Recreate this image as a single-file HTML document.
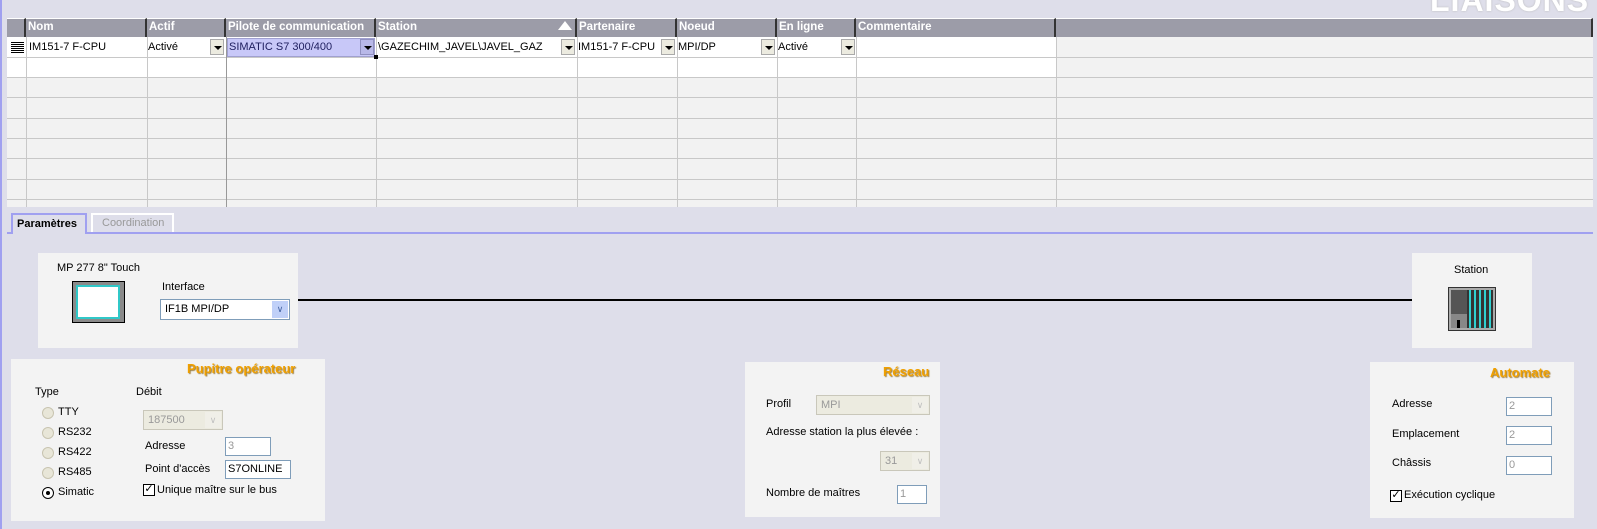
<!DOCTYPE html>
<html><head><meta charset="utf-8"><style>
*{margin:0;padding:0;box-sizing:border-box}
body{width:1597px;height:529px;background:#dedeea;font-family:"Liberation Sans",Tahoma,sans-serif;font-size:11px;color:#000;position:relative;overflow:hidden}
.a{position:absolute;white-space:nowrap}
.hd{position:absolute;top:18px;height:19px;background:#9c9ca8;color:#fff;font-weight:bold;font-size:11.5px;padding:2px 0 0 2px;border-top:1px solid #fff;border-right:2px solid #333}
.vl{position:absolute;top:37px;height:170px;width:1px;background:#c8c8c8}
.hl{position:absolute;left:7px;width:1586px;height:1px;background:#c8c8c8}
.dd{position:absolute;width:14px;height:16px;background:#ecebe0;border:1px solid #aaa}
.dd:after{content:"";position:absolute;left:3px;top:6px;border:4px solid transparent;border-top:4px solid #000;border-bottom:0}
.box{position:absolute;background:#f3f3f3}
.ttl{position:absolute;color:#f0a000;font-weight:bold;font-size:13px;text-shadow:1px 1px 1px #a08040}
.inp{position:absolute;background:#fff;border:1px solid #7f9db9;color:#999;padding:2px 0 0 2px;height:19px}
.sel{position:absolute;background:#ecebe0;border:1px solid #c9c7ba;color:#999;padding:3px 0 0 4px;height:20px}
.sel i{position:absolute;right:1px;top:1px;width:16px;height:16px;background:#f0efe8;color:#c0c0c0;font-style:normal;font-size:9px;text-align:center;line-height:16px}
.rad{position:absolute;width:12px;height:12px;border-radius:50%;background:#e8e6d8;border:1px solid #c8c4b0}
.cb{position:absolute;width:12px;height:12px;border:1px solid #000;background:#fff;font-size:11px;line-height:9px;text-align:center}
</style></head><body>
<div class="a" style="left:0;top:0;width:2px;height:529px;background:#a0a0f0"></div>
<div class="a" style="left:1430px;top:-18px;font-size:32px;font-weight:bold;color:#fff;letter-spacing:1px;text-shadow:0 0 2px #bbb">LIAISONS</div>

<div class="a" style="left:7px;top:37px;width:1586px;height:170px;background:#f2f2f2"></div>
<div class="a" style="left:7px;top:37px;width:1049px;height:40px;background:#fff"></div>
<div class="a" style="left:7px;top:57px;width:19px;height:20px;background:#fff"></div>
<div class="hl" style="top:57px"></div><div class="hl" style="top:77px"></div><div class="hl" style="top:97px"></div><div class="hl" style="top:118px"></div><div class="hl" style="top:138px"></div><div class="hl" style="top:158px"></div><div class="hl" style="top:179px"></div><div class="hl" style="top:199px"></div>
<div class="vl" style="left:26px"></div><div class="vl" style="left:147px"></div><div class="vl" style="left:226px;background:#999"></div><div class="vl" style="left:376px"></div><div class="vl" style="left:577px"></div><div class="vl" style="left:677px"></div><div class="vl" style="left:777px"></div><div class="vl" style="left:856px"></div><div class="vl" style="left:1056px"></div>
<div class="hd" style="left:7px;width:19px"></div>
<div class="hd" style="left:26px;width:121px">Nom</div>
<div class="hd" style="left:147px;width:79px">Actif</div>
<div class="hd" style="left:226px;width:150px">Pilote de communication</div>
<div class="hd" style="left:376px;width:201px">Station<span style="position:absolute;right:3px;top:2px;border:7px solid transparent;border-bottom:9px solid #fff;border-top:0"></span></div>
<div class="hd" style="left:577px;width:100px">Partenaire</div>
<div class="hd" style="left:677px;width:100px">Noeud</div>
<div class="hd" style="left:777px;width:79px">En ligne</div>
<div class="hd" style="left:856px;width:200px">Commentaire</div>
<div class="hd" style="left:1056px;width:537px"></div>
<div class="a" style="left:11px;top:42px;width:13px;height:11px;background:repeating-linear-gradient(#000 0 1px,#fff 1px 2px)"></div>
<div class="a" style="left:29px;top:41px">IM151-7 F-CPU</div>
<div class="a" style="left:148px;top:41px">Activé</div><div class="dd" style="left:210px;top:39px"></div>
<div class="a" style="left:227px;top:38px;width:148px;height:19px;background:#c8c8f8;border:1px solid #a0a0d0;padding:2px 0 0 1px;color:#202060">SIMATIC S7 300/400</div><div class="dd" style="left:360px;top:39px;background:#b8b8e8;border-color:#9090c0"></div>
<div class="a" style="left:374px;top:55px;width:4px;height:4px;background:#000"></div>
<div class="a" style="left:378px;top:41px">\GAZECHIM_JAVEL\JAVEL_GAZ</div><div class="dd" style="left:561px;top:39px"></div>
<div class="a" style="left:578px;top:41px">IM151-7 F-CPU</div><div class="dd" style="left:661px;top:39px"></div>
<div class="a" style="left:678px;top:41px">MPI/DP</div><div class="dd" style="left:761px;top:39px"></div>
<div class="a" style="left:778px;top:41px">Activé</div><div class="dd" style="left:841px;top:39px"></div>

<div class="a" style="left:7px;top:232px;width:1586px;height:2px;background:#a0a0f0"></div>
<div class="a" style="left:11px;top:213px;width:76px;height:21px;border:2px solid #a0a0f0;border-bottom:0;background:#dedeea;font-weight:bold;padding:3px 0 0 4px">Paramètres</div>
<div class="a" style="left:91px;top:213px;width:83px;height:19px;border:2px solid #fff;border-bottom:0;color:#999;padding:2px 0 0 9px">Coordination</div>

<div class="box" style="left:38px;top:253px;width:260px;height:95px"></div>
<div class="a" style="left:57px;top:262px">MP 277 8" Touch</div>
<div class="a" style="left:72px;top:281px;width:53px;height:42px;background:#8a8a8a;border:1px solid #000"></div>
<div class="a" style="left:76px;top:285px;width:44px;height:34px;background:#fff;border:2px solid #30c8c8"></div>
<div class="a" style="left:162px;top:281px">Interface</div>
<div class="a" style="left:160px;top:299px;width:130px;height:21px;background:#fff;border:1px solid #7f9db9;padding:3px 0 0 4px">IF1B MPI/DP<span style="position:absolute;right:1px;top:1px;width:16px;height:17px;background:#c0d0f8;color:#4060a0;font-size:9px;text-align:center;line-height:17px">&#x2228;</span></div>
<div class="a" style="left:298px;top:299px;width:1114px;height:2px;background:#000"></div>
<div class="box" style="left:1412px;top:253px;width:120px;height:95px"></div>
<div class="a" style="left:1454px;top:264px">Station</div>
<div class="a" style="left:1449px;top:288px;width:46px;height:42px;background:#555;border:2px solid #aaa;outline:1px solid #333"></div>
<div class="a" style="left:1451px;top:290px;width:42px;height:38px;background:repeating-linear-gradient(90deg,#333 0 3px,#30d0d0 3px 5px);clip-path:inset(0 0 0 16px)"></div>
<div class="a" style="left:1451px;top:314px;width:16px;height:14px;background:#888"></div>
<div class="a" style="left:1457px;top:320px;width:3px;height:8px;background:#000"></div>

<div class="box" style="left:11px;top:359px;width:314px;height:162px"></div>
<div class="ttl" style="left:187px;top:361px">Pupitre opérateur</div>
<div class="a" style="left:35px;top:386px">Type</div>
<div class="a" style="left:136px;top:386px">Débit</div>
<div class="rad" style="left:42px;top:407px"></div><div class="a" style="left:58px;top:406px">TTY</div>
<div class="rad" style="left:42px;top:427px"></div><div class="a" style="left:58px;top:426px">RS232</div>
<div class="rad" style="left:42px;top:447px"></div><div class="a" style="left:58px;top:446px">RS422</div>
<div class="rad" style="left:42px;top:467px"></div><div class="a" style="left:58px;top:466px">RS485</div>
<div class="rad" style="left:42px;top:487px;background:#fff;border-color:#000"><span style="position:absolute;left:3px;top:3px;width:4px;height:4px;border-radius:50%;background:#000"></span></div><div class="a" style="left:58px;top:486px">Simatic</div>
<div class="sel" style="left:143px;top:410px;width:80px">187500<i>&#x2228;</i></div>
<div class="a" style="left:145px;top:440px">Adresse</div>
<div class="inp" style="left:225px;top:437px;width:46px">3</div>
<div class="a" style="left:145px;top:463px">Point d'accès</div>
<div class="inp" style="left:225px;top:460px;width:66px;color:#000">S7ONLINE</div>
<div class="cb" style="left:143px;top:484px">&#x2713;</div><div class="a" style="left:157px;top:484px">Unique maître sur le bus</div>

<div class="box" style="left:745px;top:362px;width:195px;height:155px"></div>
<div class="ttl" style="left:883px;top:364px">Réseau</div>
<div class="a" style="left:766px;top:398px">Profil</div>
<div class="sel" style="left:816px;top:395px;width:114px">MPI<i>&#x2228;</i></div>
<div class="a" style="left:766px;top:426px">Adresse station la plus élevée :</div>
<div class="sel" style="left:880px;top:451px;width:50px">31<i>&#x2228;</i></div>
<div class="a" style="left:766px;top:487px">Nombre de maîtres</div>
<div class="inp" style="left:897px;top:485px;width:30px">1</div>

<div class="box" style="left:1370px;top:362px;width:204px;height:156px"></div>
<div class="ttl" style="left:1490px;top:365px">Automate</div>
<div class="a" style="left:1392px;top:398px">Adresse</div><div class="inp" style="left:1506px;top:397px;width:46px">2</div>
<div class="a" style="left:1392px;top:428px">Emplacement</div><div class="inp" style="left:1506px;top:426px;width:46px">2</div>
<div class="a" style="left:1392px;top:457px">Châssis</div><div class="inp" style="left:1506px;top:456px;width:46px">0</div>
<div class="cb" style="left:1390px;top:490px">&#x2713;</div><div class="a" style="left:1404px;top:489px">Exécution cyclique</div>
</body></html>
